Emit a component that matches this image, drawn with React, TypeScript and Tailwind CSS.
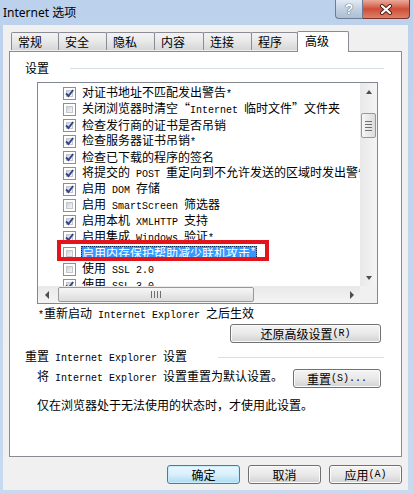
import type { ReactNode } from 'react';

const cjk = "font-['Noto_Sans_CJK_SC','Noto_Sans',sans-serif]";

const rows = [
  { on: true, text: '对证书地址不匹配发出警告*' },
  { on: false, text: '关闭浏览器时清空“Internet 临时文件”文件夹' },
  { on: true, text: '检查发行商的证书是否吊销' },
  { on: true, text: '检查服务器证书吊销*' },
  { on: true, text: '检查已下载的程序的签名' },
  { on: true, text: '将提交的 POST 重定向到不允许发送的区域时发出警告' },
  { on: true, text: '启用 DOM 存储' },
  { on: false, text: '启用 SmartScreen 筛选器' },
  { on: true, text: '启用本机 XMLHTTP 支持' },
  { on: true, text: '启用集成 Windows 验证*' },
  { on: false, text: '启用内存保护帮助减少联机攻击*', selected: true },
  { on: false, text: '使用 SSL 2.0' },
  { on: true, text: '使用 SSL 3.0' },
];

const tabs = [
  { label: '常规', w: 'w-[48px]' },
  { label: '安全', w: 'w-[49px]' },
  { label: '隐私', w: 'w-[49px]' },
  { label: '内容', w: 'w-[50px]' },
  { label: '连接', w: 'w-[49px]' },
  { label: '程序', w: 'w-[47px]' },
];

// SimSun-like text: ascii runs are half width, the rest full width
function T({ s }: { s: string }) {
  const parts = s.split(/([\x20-\x7e]+)/);
  return (
    <>
      {parts.map((p, i) =>
        p === '' ? null : /^[\x20-\x7e]+$/.test(p) ? (
          <span key={i} className="font-['Liberation_Mono',monospace] text-[10px]">
            {p}
          </span>
        ) : (
          <span key={i} className="[font-feature-settings:'fwid']">
            {p}
          </span>
        ),
      )}
    </>
  );
}

function Check({ on }: { on: boolean }) {
  return (
    <span className="relative flex w-[13px] h-[13px] shrink-0 border border-[#8e8f8f] bg-white p-[2px]">
      <span className="flex-1 border border-[#c3c6ca] bg-gradient-to-br from-[#cdd0d4] to-[#f8f8f8]" />
      {on && (
        <svg className="absolute -left-px -top-px" width="13" height="13" viewBox="0 0 13 13">
          <path d="M3 6.3 5.4 9 10.2 3" fill="none" stroke="#2f4589" strokeWidth="1.9" />
        </svg>
      )}
    </span>
  );
}

function Btn({ children, className, primary }: { children: ReactNode; className: string; primary?: boolean }) {
  return (
    <div
      className={
        primary
          ? `h-[19px] flex items-center justify-center rounded-[3px] border border-[#3c7fb1] bg-gradient-to-b from-[#eaf6fd] via-[#d9f0fc] to-[#a9daf5] shadow-[inset_0_0_0_1px_#c9ecfd] text-[12px] leading-none ${className}`
          : `h-[19px] flex items-center justify-center rounded-[3px] border border-[#707070] bg-gradient-to-b from-[#f4f4f4] via-[#e9e9e9] to-[#d2d2d2] shadow-[inset_0_0_0_1px_#fbfbfb] text-[12px] leading-none ${className}`
      }
    >
      {children}
    </div>
  );
}

function Arrow({ dir }: { dir: 'up' | 'down' | 'left' | 'right' }) {
  const d = {
    up: 'M1 5 4 1 7 5Z',
    down: 'M1 1 4 5 7 1Z',
    left: 'M5 0 1 4 5 8Z',
    right: 'M1 0 5 4 1 8Z',
  }[dir];
  const vertical = dir === 'up' || dir === 'down';
  return (
    <svg width={vertical ? 8 : 6} height={vertical ? 6 : 8} viewBox={vertical ? '0 0 8 6' : '0 0 6 8'}>
      <path d={d} fill="#4d4d4d" />
    </svg>
  );
}

export default function App() {
  return (
    <div className={`w-[413px] h-[494px] flex flex-col bg-gradient-to-b from-[#bcd1ec] to-[#c8daef] text-black ${cjk}`}>
      {/* title bar */}
      <div className="h-[25px] flex items-start justify-between pl-[3px] pr-[3px]">
        <div className="mt-[5px] text-[12px] leading-[16px] font-['Noto_Sans','Noto_Sans_CJK_SC',sans-serif]">
          Internet 选项
        </div>
        <div className="flex">
          <div className="w-[28px] h-[19px] flex items-center justify-center rounded-bl-[4px] border border-t-0 border-[#6b7c94] bg-gradient-to-b from-[#e3ebf5] via-[#c2d0e1] to-[#aebfd4] text-white font-bold text-[14px] leading-none font-['Liberation_Sans',sans-serif] [text-shadow:0_0_1px_#44546c,0_0_1px_#44546c]">
            ?
          </div>
          <div className="w-[47px] h-[19px] flex items-center justify-center rounded-br-[4px] border border-t-0 border-l-0 border-[#7d3328] bg-gradient-to-b from-[#e9aa9c] via-[#cf4d38] to-[#dc806a]">
            <svg width="14" height="11" viewBox="0 0 14 11">
              <path d="M3 2 11 9M11 2 3 9" stroke="#4a1d16" strokeWidth="4" strokeLinecap="round" />
              <path d="M3 2 11 9M11 2 3 9" stroke="#ffffff" strokeWidth="2.2" strokeLinecap="round" />
            </svg>
          </div>
        </div>
      </div>

      {/* client area */}
      <div className="ml-[3px] mr-[5px] h-[465px] bg-[#f0f0f0] flex flex-col">
        {/* tabs */}
        <div className="h-[26px] flex items-end pl-[8px]">
          {tabs.map((t) => (
            <div
              key={t.label}
              className={`${t.w} h-[18px] -mr-px mb-px flex items-center pl-[6px] border border-b-0 border-[#898c95] rounded-t-[2px] bg-gradient-to-b from-[#f3f3f3] via-[#e8e8e8] to-[#d6d6d6] text-[12px] leading-none`}
            >
              {t.label}
            </div>
          ))}
          <div className="relative z-10 w-[52px] h-[21px] -mb-px flex items-center pl-[7px] pb-[2px] border border-b-0 border-[#898c95] rounded-t-[2px] bg-white text-[12px] leading-none">
            高级
          </div>
        </div>

        {/* tab panel */}
        <div className="mx-[6px] h-[406px] border border-[#898c95] bg-white flex flex-col text-[12px] leading-[14px]">
          <div className="mt-[9px] h-[14px] flex items-center pl-[15px]">
            <span>设置</span>
            <div className="ml-[21px] mr-[17px] flex-1 h-px bg-[#d5dfe5]" />
          </div>

          {/* list box */}
          <div className="mt-[7px] ml-[27px] w-[341px] h-[222px] border border-[#828790] flex flex-col">
            <div className="flex h-[203px]">
              <div className="relative flex-1 overflow-hidden pt-[2px]">
                {rows.map((r) => (
                  <div key={r.text} className="h-[16px] flex items-center pl-[25px] whitespace-pre">
                    <Check on={r.on} />
                    <span
                      className={
                        r.selected
                          ? 'ml-[5px] px-px h-[15px] flex items-center bg-[#3399ff] text-white outline outline-1 outline-dotted outline-[#0b2a55] -outline-offset-1'
                          : 'ml-[5px] px-px'
                      }
                    >
                      <T s={r.text} />
                    </span>
                  </div>
                ))}
                <div className="absolute left-[19px] top-[157px] w-[212px] h-[21px] border-[4px] border-[#e3141c]" />
              </div>
              {/* vertical scrollbar */}
              <div className="w-[17px] flex flex-col bg-gradient-to-r from-[#e9e9e9] to-[#f4f4f4]">
                <div className="h-[17px] flex items-center justify-center">
                  <Arrow dir="up" />
                </div>
                <div className="flex-1">
                  <div className="mt-[13px] ml-px w-[15px] h-[25px] rounded-[2px] border border-[#989898] bg-gradient-to-r from-[#f6f6f6] to-[#dcdcdc] flex flex-col items-center justify-center gap-[2px]">
                    <div className="w-[7px] h-px bg-[#707070]" />
                    <div className="w-[7px] h-px bg-[#707070]" />
                    <div className="w-[7px] h-px bg-[#707070]" />
                    <div className="w-[7px] h-px bg-[#707070]" />
                  </div>
                </div>
                <div className="h-[17px] flex items-center justify-center">
                  <Arrow dir="down" />
                </div>
              </div>
            </div>
            {/* horizontal scrollbar */}
            <div className="flex h-[17px]">
              <div className="flex-1 flex items-center bg-gradient-to-b from-[#e9e9e9] to-[#f4f4f4]">
                <div className="w-[17px] h-[17px] flex items-center justify-center">
                  <Arrow dir="left" />
                </div>
                <div className="ml-[3px] w-[196px] h-[15px] rounded-[2px] border border-[#989898] bg-gradient-to-b from-[#f6f6f6] to-[#dcdcdc] flex items-center justify-center gap-[2px]">
                  <div className="w-px h-[7px] bg-[#707070]" />
                  <div className="w-px h-[7px] bg-[#707070]" />
                  <div className="w-px h-[7px] bg-[#707070]" />
                  <div className="w-px h-[7px] bg-[#707070]" />
                </div>
                <div className="flex-1" />
                <div className="w-[17px] h-[17px] flex items-center justify-center">
                  <Arrow dir="right" />
                </div>
              </div>
              <div className="w-[17px] bg-[#f0f0f0]" />
            </div>
          </div>

          <div className="mt-[2px] h-[14px] pl-[28px] whitespace-pre">
            <T s="*重新启动 Internet Explorer 之后生效" />
          </div>
          <Btn className="mt-[4px] ml-[220px] w-[151px]">
            <T s="还原高级设置(R)" />
          </Btn>

          <div className="mt-[7px] h-[14px] flex items-center pl-[15px] whitespace-pre">
            <span>
              <T s="重置 Internet Explorer 设置" />
            </span>
            <div className="ml-[31px] mr-[17px] flex-1 h-px bg-[#d5dfe5]" />
          </div>
          <div className="mt-[5px] h-[19px] flex items-start pl-[27px] whitespace-pre">
            <span className="w-[256px] h-[14px]">
              <T s="将 Internet Explorer 设置重置为默认设置。" />
            </span>
            <Btn className="w-[88px]">
              <T s="重置(S)..." />
            </Btn>
          </div>
          <div className="mt-[10px] h-[14px] pl-[27px]">仅在浏览器处于无法使用的状态时，才使用此设置。</div>
        </div>

        {/* dialog buttons */}
        <div className="mt-[8px] flex justify-end gap-[8px] pr-[6px]">
          <Btn primary className="w-[73px]">
            确定
          </Btn>
          <Btn className="w-[73px]">取消</Btn>
          <Btn className="w-[73px]">
            <T s="应用(A)" />
          </Btn>
        </div>
      </div>
    </div>
  );
}
